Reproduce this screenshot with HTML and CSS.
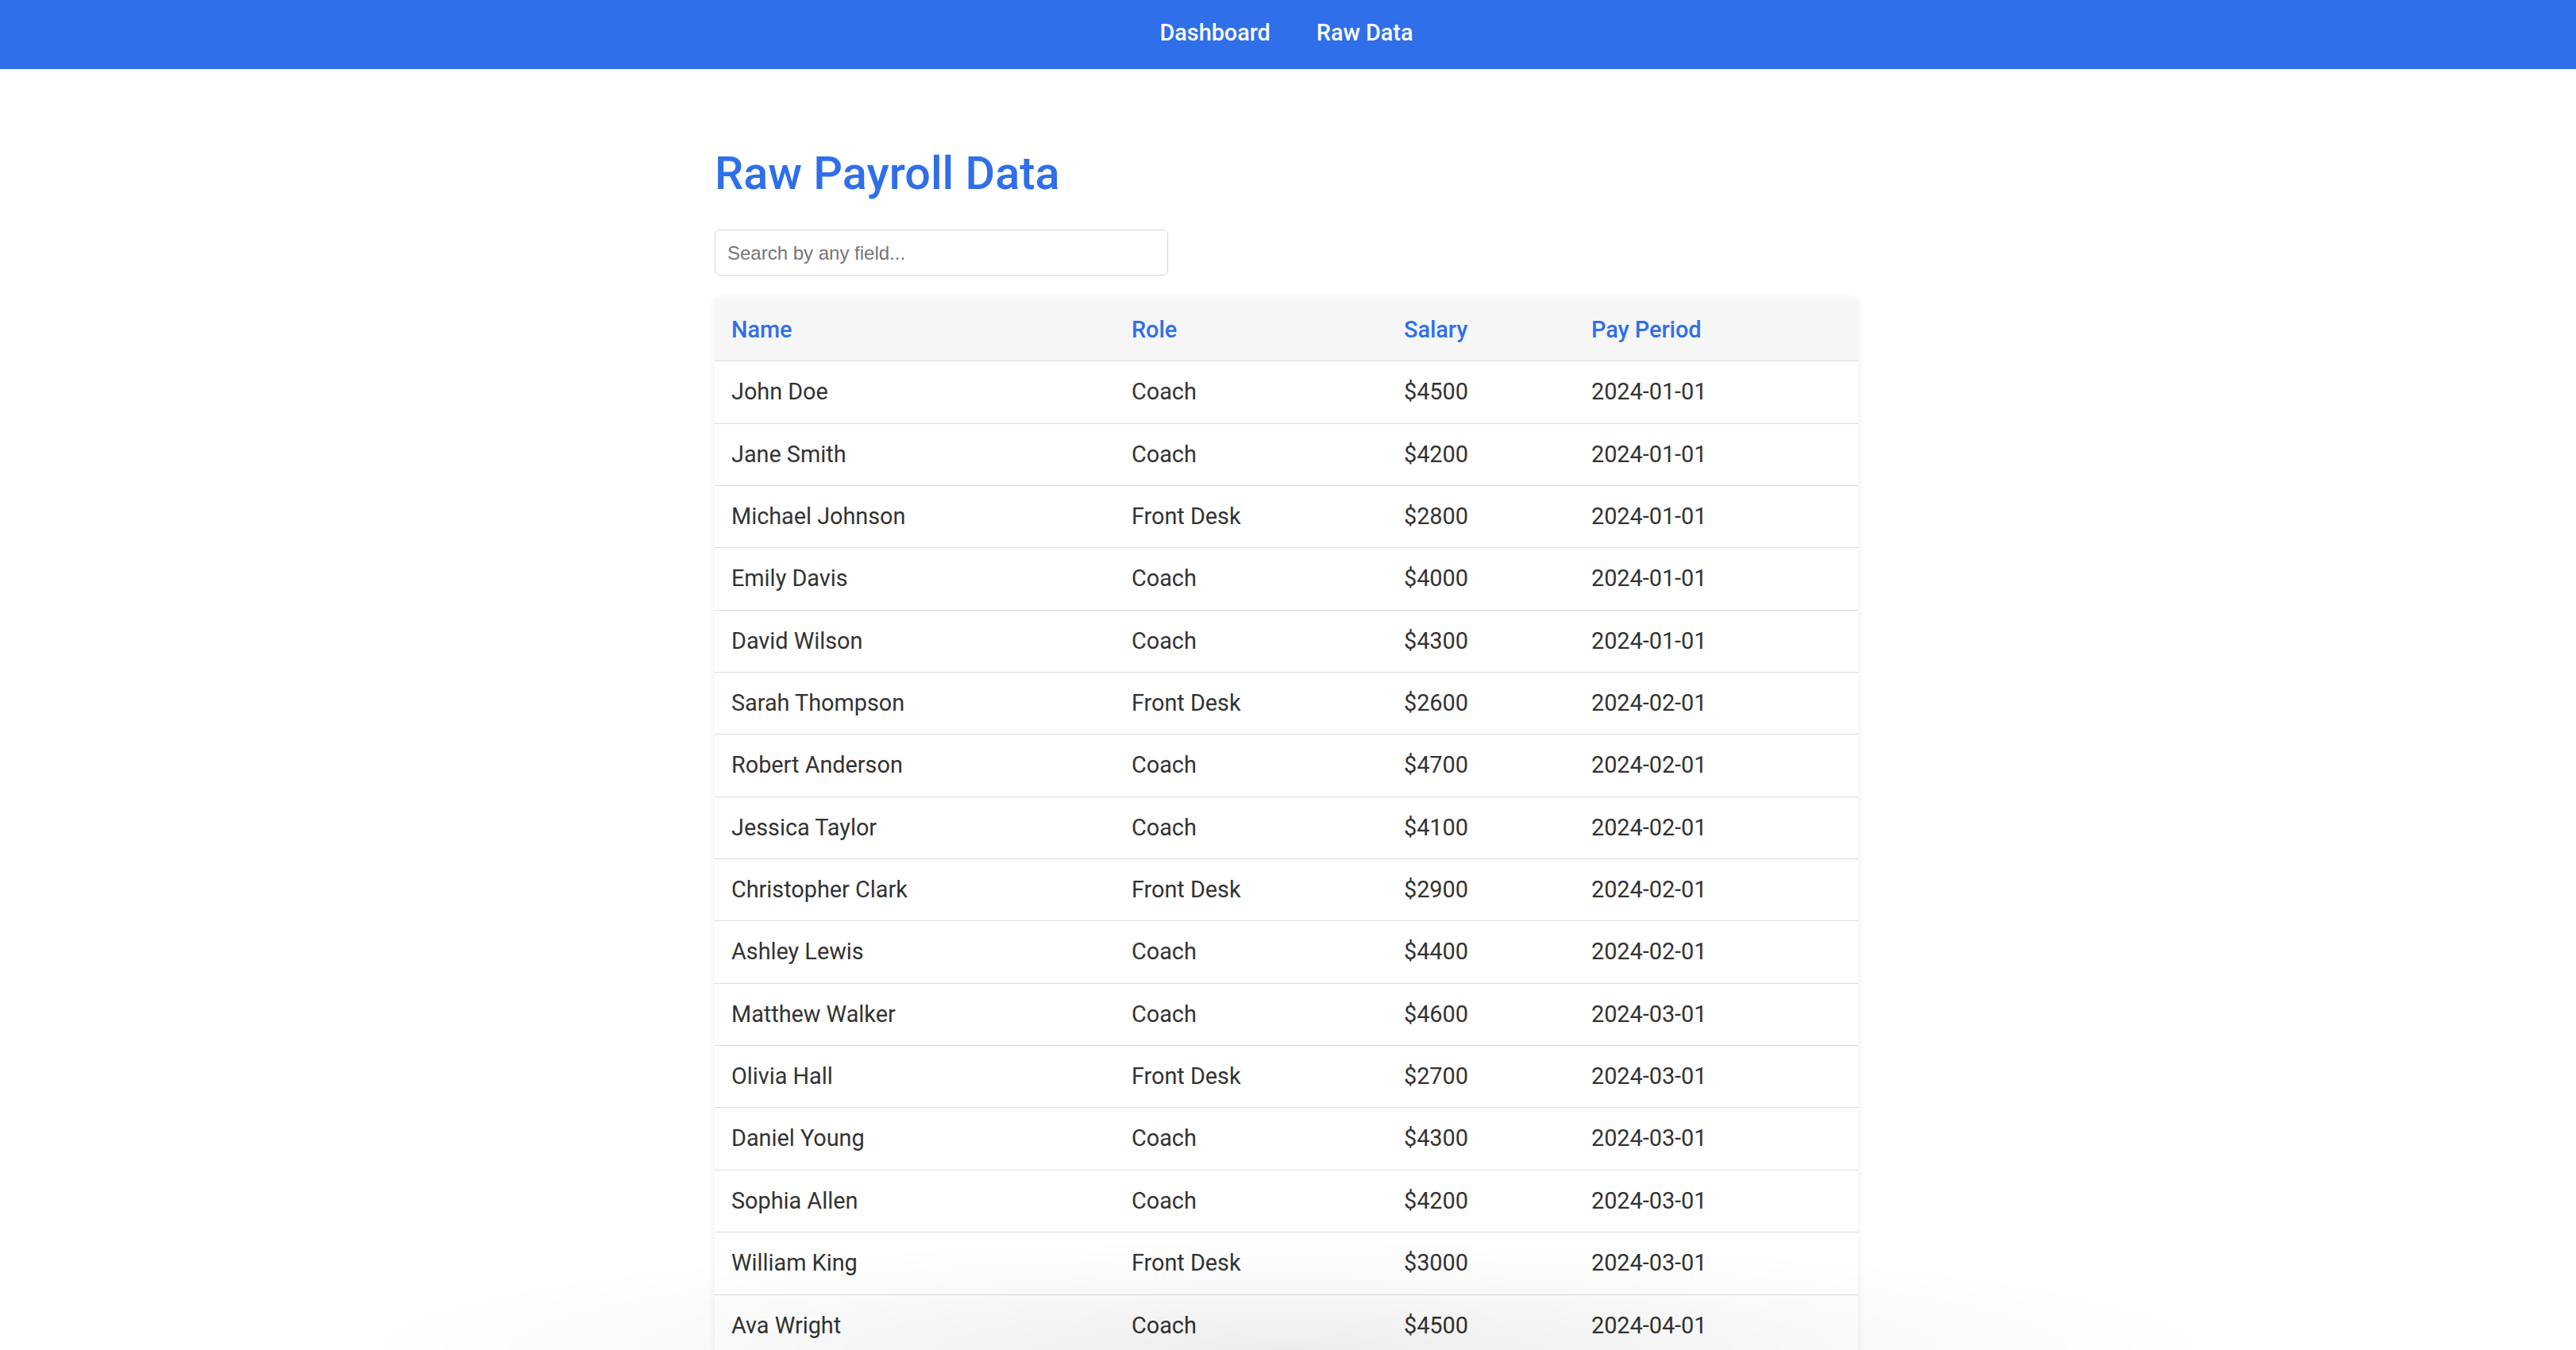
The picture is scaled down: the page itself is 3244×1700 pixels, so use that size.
FILE: index.html
```html
<!DOCTYPE html>
<html lang="en">
<head>
<meta charset="utf-8">
<title>Raw Payroll Data</title>
<link rel="stylesheet" href="styles.css">
</head>
<body>
<nav class="topnav">
  <a class="nav-link" href="#">Dashboard</a>
  <a class="nav-link" href="#">Raw Data</a>
</nav>
<main class="content">
  <h1 class="page-title">Raw Payroll Data</h1>
  <input class="search" type="text" placeholder="Search by any field...">
  <div class="table-card">
    <table class="data-table">
      <colgroup>
        <col class="col-name">
        <col class="col-role">
        <col class="col-salary">
        <col class="col-period">
      </colgroup>
      <thead>
        <tr><th>Name</th><th>Role</th><th>Salary</th><th>Pay Period</th></tr>
      </thead>
      <tbody>
        <tr><td>John Doe</td><td>Coach</td><td>$4500</td><td>2024-01-01</td></tr>
        <tr><td>Jane Smith</td><td>Coach</td><td>$4200</td><td>2024-01-01</td></tr>
        <tr><td>Michael Johnson</td><td>Front Desk</td><td>$2800</td><td>2024-01-01</td></tr>
        <tr><td>Emily Davis</td><td>Coach</td><td>$4000</td><td>2024-01-01</td></tr>
        <tr><td>David Wilson</td><td>Coach</td><td>$4300</td><td>2024-01-01</td></tr>
        <tr><td>Sarah Thompson</td><td>Front Desk</td><td>$2600</td><td>2024-02-01</td></tr>
        <tr><td>Robert Anderson</td><td>Coach</td><td>$4700</td><td>2024-02-01</td></tr>
        <tr><td>Jessica Taylor</td><td>Coach</td><td>$4100</td><td>2024-02-01</td></tr>
        <tr><td>Christopher Clark</td><td>Front Desk</td><td>$2900</td><td>2024-02-01</td></tr>
        <tr><td>Ashley Lewis</td><td>Coach</td><td>$4400</td><td>2024-02-01</td></tr>
        <tr><td>Matthew Walker</td><td>Coach</td><td>$4600</td><td>2024-03-01</td></tr>
        <tr><td>Olivia Hall</td><td>Front Desk</td><td>$2700</td><td>2024-03-01</td></tr>
        <tr><td>Daniel Young</td><td>Coach</td><td>$4300</td><td>2024-03-01</td></tr>
        <tr><td>Sophia Allen</td><td>Coach</td><td>$4200</td><td>2024-03-01</td></tr>
        <tr><td>William King</td><td>Front Desk</td><td>$3000</td><td>2024-03-01</td></tr>
        <tr><td>Ava Wright</td><td>Coach</td><td>$4500</td><td>2024-04-01</td></tr>
        <tr><td>James Scott</td><td>Coach</td><td>$4100</td><td>2024-04-01</td></tr>
        <tr><td>Mia Green</td><td>Front Desk</td><td>$2800</td><td>2024-04-01</td></tr>
      </tbody>
    </table>
  </div>
</main>
<div class="bottom-fade"></div>
</body>
</html>
```
FILE: styles.css
```css
html, body {
  margin: 0;
  padding: 0;
  background: #ffffff;
}

body {
  font-family: Roboto, "Noto Sans", Arial, sans-serif;
  color: #333333;
}

.topnav {
  background: #2f6fe9;
  height: 87px;
  box-sizing: border-box;
  padding-top: 25px;
  display: flex;
  justify-content: center;
  gap: 58px;
  padding-right: 4px;
}

.nav-link {
  color: #ffffff;
  text-decoration: none;
  font-size: 28.8px;
  font-weight: 500;
  line-height: 33.75px;
}

.content {
  width: 1440px;
  margin: 0 auto;
  padding-top: 98px;
  position: relative;
  left: -2px;
}

.page-title {
  margin: 0 0 36.5px 0;
  font-size: 57.6px;
  font-weight: 500;
  line-height: 67.5px;
  color: #2f6fe9;
}

.search {
  display: block;
  box-sizing: border-box;
  width: 571px;
  height: 58px;
  margin: 0 0 30px 0;
  padding: 2px 15px 0 15px;
  border: 1px solid #d6d6d6;
  border-radius: 7px;
  font-family: "Liberation Sans", Arial, sans-serif;
  font-size: 24px;
  color: #333333;
  background: #ffffff;
}

.search::placeholder {
  color: #767676;
}

.table-card {
  background: #ffffff;
  box-shadow: 0 0 10px rgba(0, 0, 0, 0.07);
  border-radius: 3px;
  overflow: hidden;
}

.data-table {
  width: 100%;
  border-collapse: collapse;
  table-layout: fixed;
}

.col-name { width: 504px; }
.col-role { width: 343px; }
.col-salary { width: 236px; }
.col-period { width: 357px; }

.data-table th,
.data-table td {
  text-align: left;
  padding: 22px 21px;
  line-height: 33.35px;
  font-size: 28.8px;
  border-bottom: 1px solid #dedede;
  white-space: nowrap;
}

.data-table th {
  background: #f6f6f6;
  color: #2f6fe9;
  font-weight: 500;
}

.data-table td {
  color: #333333;
  font-weight: 400;
}

.bottom-fade {
  position: fixed;
  left: 0;
  right: 0;
  bottom: 0;
  height: 140px;
  pointer-events: none;
  background: radial-gradient(ellipse 1180px 140px at 50% 100%, rgba(0, 0, 0, 0.07), rgba(0, 0, 0, 0.025) 60%, rgba(0, 0, 0, 0) 100%);
}
```
